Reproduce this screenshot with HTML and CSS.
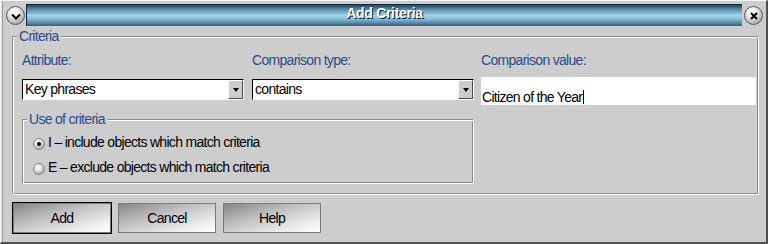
FILE: index.html
```html
<!DOCTYPE html>
<html>
<head>
<meta charset="utf-8">
<title>Add Criteria</title>
<link rel="stylesheet" href="styles.css">
</head>
<body>
<div class="window">
  <div class="titlebar">
    <span class="tbtn tbtn-left">
      <svg width="10" height="7" viewBox="0 0 10 7"><path d="M1 1.5 L5 5.5 L9 1.5" fill="none" stroke="#000" stroke-width="2"/></svg>
    </span>
    <div class="title">Add Criteria</div>
    <span class="tbtn tbtn-right">
      <svg width="8" height="8" viewBox="0 0 8 8"><path d="M1 1 L7 7 M7 1 L1 7" fill="none" stroke="#000" stroke-width="2"/></svg>
    </span>
  </div>
  <div class="content">
    <fieldset class="group criteria">
      <legend>Criteria</legend>
      <div class="criteria-body">
        <div class="fields">
          <div class="col col-attr">
            <span class="lbl">Attribute:</span>
            <div class="combo"><span class="combo-text">Key phrases</span><span class="combo-btn"><span class="arrow"></span></span></div>
          </div>
          <div class="col col-type">
            <span class="lbl">Comparison type:</span>
            <div class="combo"><span class="combo-text">contains</span><span class="combo-btn"><span class="arrow"></span></span></div>
          </div>
          <div class="col col-value">
            <span class="lbl">Comparison value:</span>
            <div class="textfield">Citizen of the Year<span class="caret"></span></div>
          </div>
        </div>
        <fieldset class="group use">
          <legend>Use of criteria</legend>
          <div class="radios">
            <div class="radio-row"><span class="radio checked"></span><span>I – include objects which match criteria</span></div>
            <div class="radio-row"><span class="radio"></span><span>E – exclude objects which match criteria</span></div>
          </div>
        </fieldset>
      </div>
    </fieldset>
    <div class="buttons">
      <button class="btn btn-default">Add</button>
      <button class="btn">Cancel</button>
      <button class="btn">Help</button>
    </div>
  </div>
</div>
</body>
</html>
```
FILE: styles.css
```css
html, body {
  margin: 0;
  padding: 0;
  background: #cdcdcd;
}
body {
  font-family: "Liberation Sans", Arial, sans-serif;
  font-size: 14px;
  line-height: 15px;
  letter-spacing: -0.7px;
  color: #000;
}
.window {
  width: 768px;
  height: 244px;
  box-sizing: border-box;
  border-style: solid;
  border-width: 1px 2px 2px 1px;
  border-color: #f4f4f4 #505050 #505050 #f4f4f4;
  box-shadow: inset 1px 0 0 #e6e6e6, inset 2px 0 0 #9a9a9a;
  background: #cdcdcd;
}
.titlebar {
  display: flex;
  height: 22px;
  margin-top: 3px;
  padding: 0 3px 0 5px;
}
.tbtn {
  flex: none;
  width: 19px;
  height: 19px;
  margin-top: 2px;
  box-sizing: border-box;
  border-radius: 50%;
  border: 1px solid #5a5a5a;
  background: radial-gradient(circle at 40% 30%, #ffffff 0%, #ececec 30%, #b4b4b4 70%, #808080 100%);
  display: flex;
  align-items: center;
  justify-content: center;
}
.tbtn-left { margin-right: 1px; }
.tbtn-left svg { margin-top: 2px; }
.tbtn-right { margin-left: 2px; }
.title {
  flex: 1;
  height: 22px;
  box-sizing: border-box;
  border-top: 1px solid #14293a;
  border-left: 1px solid #14293a;
  background: linear-gradient(to bottom, #24445a 0%, #5a90ae 22%, #a2d3ec 50%, #84b8d4 68%, #4e82a0 88%, #30607c 100%);
  text-align: center;
  font-weight: bold;
  font-size: 14px;
  line-height: 17px;
  letter-spacing: -0.3px;
  color: #ffffff;
  text-shadow: 1px 1px 0 #101010;
}
.content {
  padding: 3px 7px 0 11px;
}
.group {
  margin: 0;
  padding: 0 2px 0 4px;
  min-width: 0;
  border: 1px solid;
  border-color: #8a8a8a #ffffff #ffffff #8a8a8a;
  box-shadow: inset 1px 1px 0 #ffffff, inset -1px -1px 0 #8a8a8a;
}
.group > legend {
  padding: 0 2px;
  line-height: 15px;
  color: #2c4a8c;
  background: #cdcdcd;
}
.criteria-body {
  padding: 9px 0 10px 5px;
}
.fields {
  display: flex;
  align-items: flex-start;
}
.col-attr { width: 222px; margin-right: 8px; }
.col-type { width: 222px; margin-right: 7px; }
.col-value { width: 275px; }
.lbl {
  display: block;
  color: #2c4a8c;
}
.combo {
  display: flex;
  height: 21px;
  margin-top: 11px;
  box-sizing: border-box;
  border: 1px solid;
  border-color: #000000 #ffffff #ffffff #000000;
  background: #ffffff;
}
.combo-text {
  flex: 1;
  line-height: 19px;
  padding-left: 2px;
}
.combo-btn {
  flex: none;
  width: 15px;
  box-sizing: border-box;
  border: 1px solid;
  border-color: #ffffff #4a4a4a #4a4a4a #ffffff;
  background: #cdcdcd;
  display: flex;
  align-items: center;
  justify-content: center;
}
.arrow {
  width: 0;
  height: 0;
  border-left: 3px solid transparent;
  border-right: 3px solid transparent;
  border-top: 4px solid #000;
}
.textfield {
  height: 28px;
  margin-top: 9px;
  box-sizing: border-box;
  background: #ffffff;
  padding: 13px 0 0 1px;
  white-space: nowrap;
}
.caret {
  display: inline-block;
  width: 1px;
  height: 14px;
  margin-left: 1px;
  background: #000;
  vertical-align: top;
}
.use {
  width: 452px;
  box-sizing: border-box;
  margin-top: 7px;
  padding-bottom: 3px;
}
.radios {
  padding: 3px 0 0 6px;
}
.radio-row {
  display: flex;
  align-items: center;
  height: 25px;
}
.radio {
  flex: none;
  width: 12px;
  height: 12px;
  margin: 3px 3px 0 0;
  box-sizing: border-box;
  border-radius: 50%;
  border: 1px solid #8a8a8a;
  background: radial-gradient(circle at 40% 35%, #ffffff 0%, #e6e6e6 35%, #a6a6a6 75%, #7a7a7a 100%);
  display: flex;
  align-items: center;
  justify-content: center;
}
.radio.checked::after {
  content: "";
  width: 4px;
  height: 4px;
  border-radius: 50%;
  background: #000;
}
.buttons {
  display: flex;
  gap: 7px;
  margin-top: 8px;
  padding-left: 1px;
}
.btn {
  width: 98px;
  height: 30px;
  box-sizing: border-box;
  padding: 0;
  border: 1px solid #7a7a7a;
  background: linear-gradient(to bottom right, #858585 0%, #c0c0c0 40%, #eeeeee 80%, #ffffff 100%);
  font: inherit;
  letter-spacing: inherit;
  color: #000;
}
.btn-default {
  box-shadow: 0 0 0 1px #000;
}
```
